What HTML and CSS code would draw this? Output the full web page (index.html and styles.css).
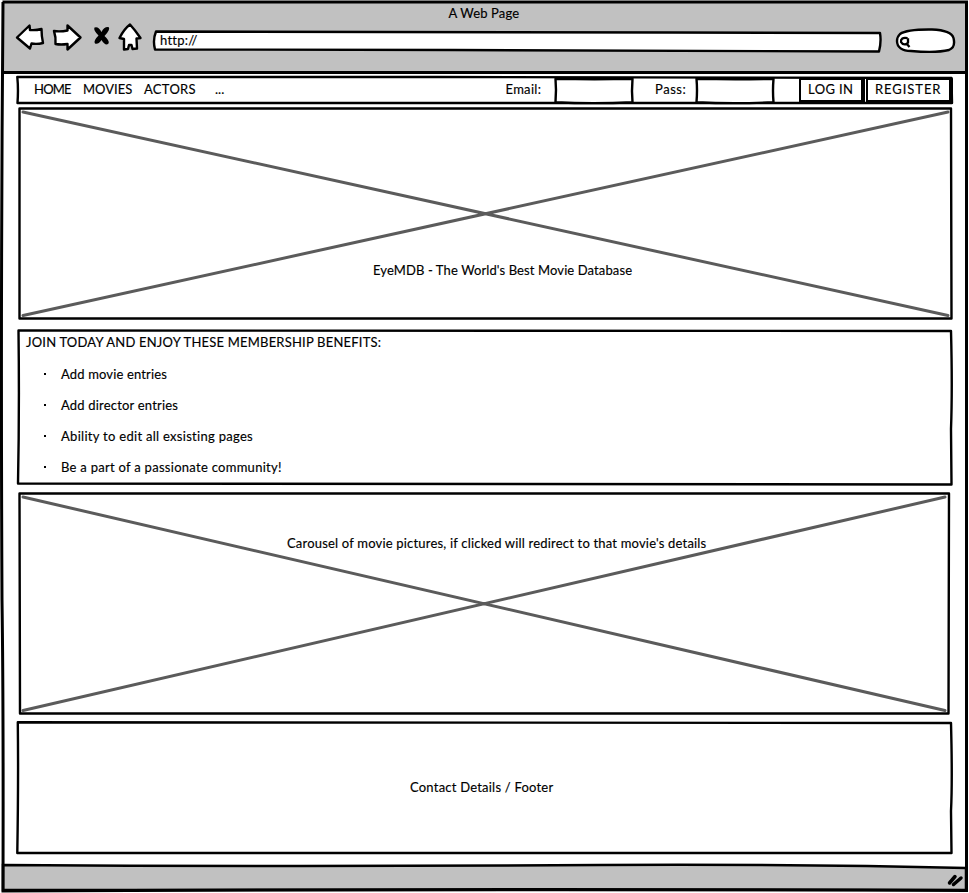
FILE: index.html
```html
<!DOCTYPE html>
<html lang="en">
<head>
<meta charset="utf-8">
<title>A Web Page</title>
<link rel="stylesheet" href="styles.css">
</head>
<body>
<div class="window">
  <header class="chrome">
    <div class="title"><span class="t-title">A Web Page</span></div>
    <div class="toolbar">
      <svg class="icons" width="136" height="34" viewBox="10 20 136 34">
        <g class="ink-fill">
          <path d="M17 37.500L29.500 25.500L30 30Q36 30.500 41.500 29Q41.500 36 43 43Q37 44.500 31.500 43.500L30 48.500Z"/>
          <path d="M54 31Q60 32 67.500 30.500L67.500 25.500L80.500 37.500L67.500 49.500L67.500 44Q61 45 55.500 44Q56 37 54 31Z"/>
          <path d="M130 24.500Q135 30 140.500 38L136.500 38.500L137 48.500L132.500 49L131.500 45L129 45L128 49L124 49.500L124 39L119.500 38Q124 29 130 24.500Z"/>
        </g>
        <path class="cross" d="M94.500 27.500Q98.500 26 101.500 32Q104 26.500 108.500 27Q111 29 104.500 36Q110 41 108.500 43.500Q105.500 46.500 101.500 40Q98 45 95 43.500Q93 41 98.500 35.500Q93 30 94.500 27.500Z"/>
      </svg>
      <div class="url">
        <svg class="sketch" viewBox="0 0 728 22"><path class="ink-fill" d="M3 1.500Q320 1 520 2.500L727 3Q728.500 12 726 21.500Q500 20.500 300 20L2 19.500Q-.5 10 3 1.500Z"/></svg>
        <span class="t-url">http://</span>
      </div>
      <svg class="search" width="62" height="26" viewBox="895 28 62 26">
        <path class="ink-fill" d="M901 34C908 29 923 29.500 933 29.500C946 30 953 33 954.500 38C956 44 955 48 950 50C938 53 924 52 912 51C903 51 898 47 898 41Q898 37 901 34Z"/>
        <path class="lens" d="M908.500 38.200C904 37 901.500 39 902 42C903.500 45 908 45 909 42.500V38.200M907 43L910.500 47"/>
      </svg>
    </div>
  </header>

  <main class="page">
    <nav class="nav">
      <svg class="sketch" viewBox="0 0 936 28"><path class="ink-fill" d="M.3 1Q300 1.500 420 1Q700 1 934.500 2L935 27Q600 26 .5 27Q1.500 13 .3 1Z"/></svg>
      <a class="t-home">HOME</a><a class="t-movies">MOVIES</a><a class="t-actors">ACTORS</a><a class="t-more">...</a>
      <form class="login">
        <label class="t-email">Email:</label>
        <span class="field"><svg class="sketch" viewBox="0 0 78 26"><path class="ink-fill" d="M.5 .8Q40 1.600 77.500 .8Q76.500 13 77.500 24.200Q38 26 .5 24.200Q1.500 12 .5 .8Z"/></svg></span>
        <label class="t-pass">Pass:</label>
        <span class="field"><svg class="sketch" viewBox="0 0 78 26"><path class="ink-fill" d="M.5 .8Q40 1.600 77.500 .8Q76.500 13 77.500 24.200Q38 26 .5 24.200Q1.500 12 .5 .8Z"/></svg></span>
        <button class="btn btn-login" type="button"><span class="t-login">LOG IN</span></button>
        <button class="btn btn-register" type="button"><span class="t-register">REGISTER</span></button>
      </form>
    </nav>

    <section class="hero">
      <svg class="sketch" viewBox="0 0 934 212">
        <path class="ink-fill" d="M1.500 1.500Q500 .5 933 1.500L933.500 211.500L1.500 211.500Z"/>
        <path class="diag" d="M5 5L930 208.500M930 5L5 208.500"/>
      </svg>
      <span class="t-hero">EyeMDB - The World's Best Movie Database</span>
    </section>

    <section class="benefits">
      <svg class="sketch" viewBox="0 0 936 157"><path class="ink-fill" d="M1.500 1.500Q400 .5 934 2Q935.500 60 934 100L934.500 155.500Q500 155.500 1 154.500Q2.500 80 1.500 1.500Z"/></svg>
      <h2><span class="t-join">JOIN TODAY AND ENJOY THESE MEMBERSHIP BENEFITS:</span></h2>
      <ul>
        <li><span class="t-b1">Add movie entries</span></li>
        <li><span class="t-b2">Add director entries</span></li>
        <li><span class="t-b3">Ability to edit all exsisting pages</span></li>
        <li><span class="t-b4">Be a part of a passionate community!</span></li>
      </ul>
    </section>

    <section class="carousel">
      <svg class="sketch" viewBox="0 0 932 222">
        <path class="ink-fill" d="M1.500 1.500Q500 .5 931 1.500L930.500 221.500L2 221.500Z"/>
        <path class="diag" d="M5 5L927 218.500M927 5L5 218.500"/>
      </svg>
      <span class="t-carousel">Carousel of movie pictures, if clicked will redirect to that movie's details</span>
    </section>

    <footer class="contact">
      <svg class="sketch" viewBox="0 0 936 134"><path class="ink-fill" d="M.8 1.300Q400 1 934 2Q935.500 60 934 90L934.500 132Q500 132.500 .3 132Q1.500 60 .8 1.300Z"/></svg>
      <span class="t-contact">Contact Details / Footer</span>
    </footer>
  </main>

  <svg class="frame" viewBox="0 0 969 893">
    <path class="status" d="M3 865Q300 867 600 865Q800 864 966 868L966 890Q600 891 3 890Z"/>
    <path class="line" d="M2.500 2L966.500 2Q967.500 400 966.500 890.500Q500 888.500 3 891Q3.500 700 2 600Q.5 300 3 2"/>
    <path class="line" d="M3 72.500L966 72.500"/>
    <path class="grip" d="M949.500 883L955 876.500M953.500 884.500L961 878"/>
  </svg>
</div>
</body>
</html>
```
FILE: styles.css
```css
* { box-sizing: border-box; }
body { margin: 0; background: #fff; color: #000; font: 13px/18px Lato, "Open Sans", sans-serif; }
.window { position: relative; width: 969px; height: 893px; overflow: hidden; -webkit-text-stroke: .15px #000; }
.sketch { position: absolute; inset: 0; width: 100%; height: 100%; overflow: visible; z-index: -1; }
.ink-fill { fill: #fff; stroke: #000; stroke-width: 2.4; stroke-linejoin: round; }

/* browser chrome */
.chrome { height: 73px; background: #c1c1c1; margin: 1px 3px 0; }
.title { height: 19px; padding: 3px 0 0 445.5px; }
.t-title { letter-spacing: .14px; }
.toolbar { display: flex; padding-left: 7px; }
.icons { flex: none; }
.cross { fill: #000; }
.url { position: relative; z-index: 0; flex: none; width: 728px; height: 22px; margin: 10px 13px 0 7px; padding: 1px 0 0 7px; }
.t-url { letter-spacing: .25px; }
.search { flex: none; margin-top: 8px; }
.lens { fill: none; stroke: #000; stroke-width: 2.3; }

.page { display: flex; flex-direction: column; padding: 2px 0 0 17px; }
.page > * { position: relative; z-index: 0; }

/* navigation and login */
.nav { display: flex; width: 936px; height: 28px; padding: 4px 0 0 17px; }
.nav > a { flex: none; }
.t-home { width: 49px; letter-spacing: -.8px; }
.t-movies { width: 61px; letter-spacing: 0; }
.t-actors { width: 71px; letter-spacing: .3px; }
.login { display: flex; width: 448px; margin: -4px 0 0 auto; }
.login label { flex: none; margin-top: 4px; }
.t-email { width: 49.5px; padding-left: .5px; letter-spacing: .3px; }
.t-pass { width: 63.5px; padding-left: 22.5px; letter-spacing: .55px; }
.field { position: relative; z-index: 0; flex: none; width: 78px; height: 26px; margin-top: 2px; }
.btn { flex: none; font: inherit; color: inherit; text-align: left; background: #fff; border: solid #000; border-width: 2px 4px 4px 2px; border-radius: 1px; height: 26px; margin-top: 2px; padding: 0 0 3px 7px; white-space: nowrap; }
.btn-login { width: 66px; margin-left: 25px; }
.btn-register { width: 87px; margin-left: 1px; }
.t-login { letter-spacing: .4px; }
.t-register { letter-spacing: .93px; }

/* content blocks */
.hero { width: 934px; height: 212px; margin: 3px 0 0 1px; padding: 154px 0 0 355px; }
.t-hero { letter-spacing: .11px; }
.benefits { width: 936px; height: 157px; margin-top: 10px; padding: 4px 0 0 9px; }
.benefits h2 { margin: 0; font: inherit; }
.benefits ul { list-style: none; margin: 7px 0 0; padding: 0 0 0 18px; }
.benefits li { display: flex; align-items: center; height: 31px; }
.benefits li::before { content: ""; width: 2px; height: 2px; margin-right: 15px; background: #000; }
.t-join { letter-spacing: .2px; }
.t-b1 { letter-spacing: .15px; }
.t-b2 { letter-spacing: .19px; }
.t-b3 { letter-spacing: .29px; }
.t-b4 { letter-spacing: .28px; }
.carousel { width: 932px; height: 222px; margin: 6px 0 0 1px; padding: 42px 0 0 269px; }
.t-carousel { letter-spacing: .19px; }
.contact { width: 936px; height: 134px; margin-top: 7px; padding: 57px 0 0 393px; }
.t-contact { letter-spacing: .22px; }
.diag { stroke: #5b5b5b; stroke-width: 3; stroke-linecap: round; }

/* outer frame and status bar */
.frame { position: absolute; inset: 0; width: 969px; height: 893px; pointer-events: none; }
.line { fill: none; stroke: #000; stroke-width: 3; }
.status { fill: #c1c1c1; stroke: #000; stroke-width: 2.500; }
.grip { stroke: #000; stroke-width: 3.500; stroke-linecap: round; }
```
